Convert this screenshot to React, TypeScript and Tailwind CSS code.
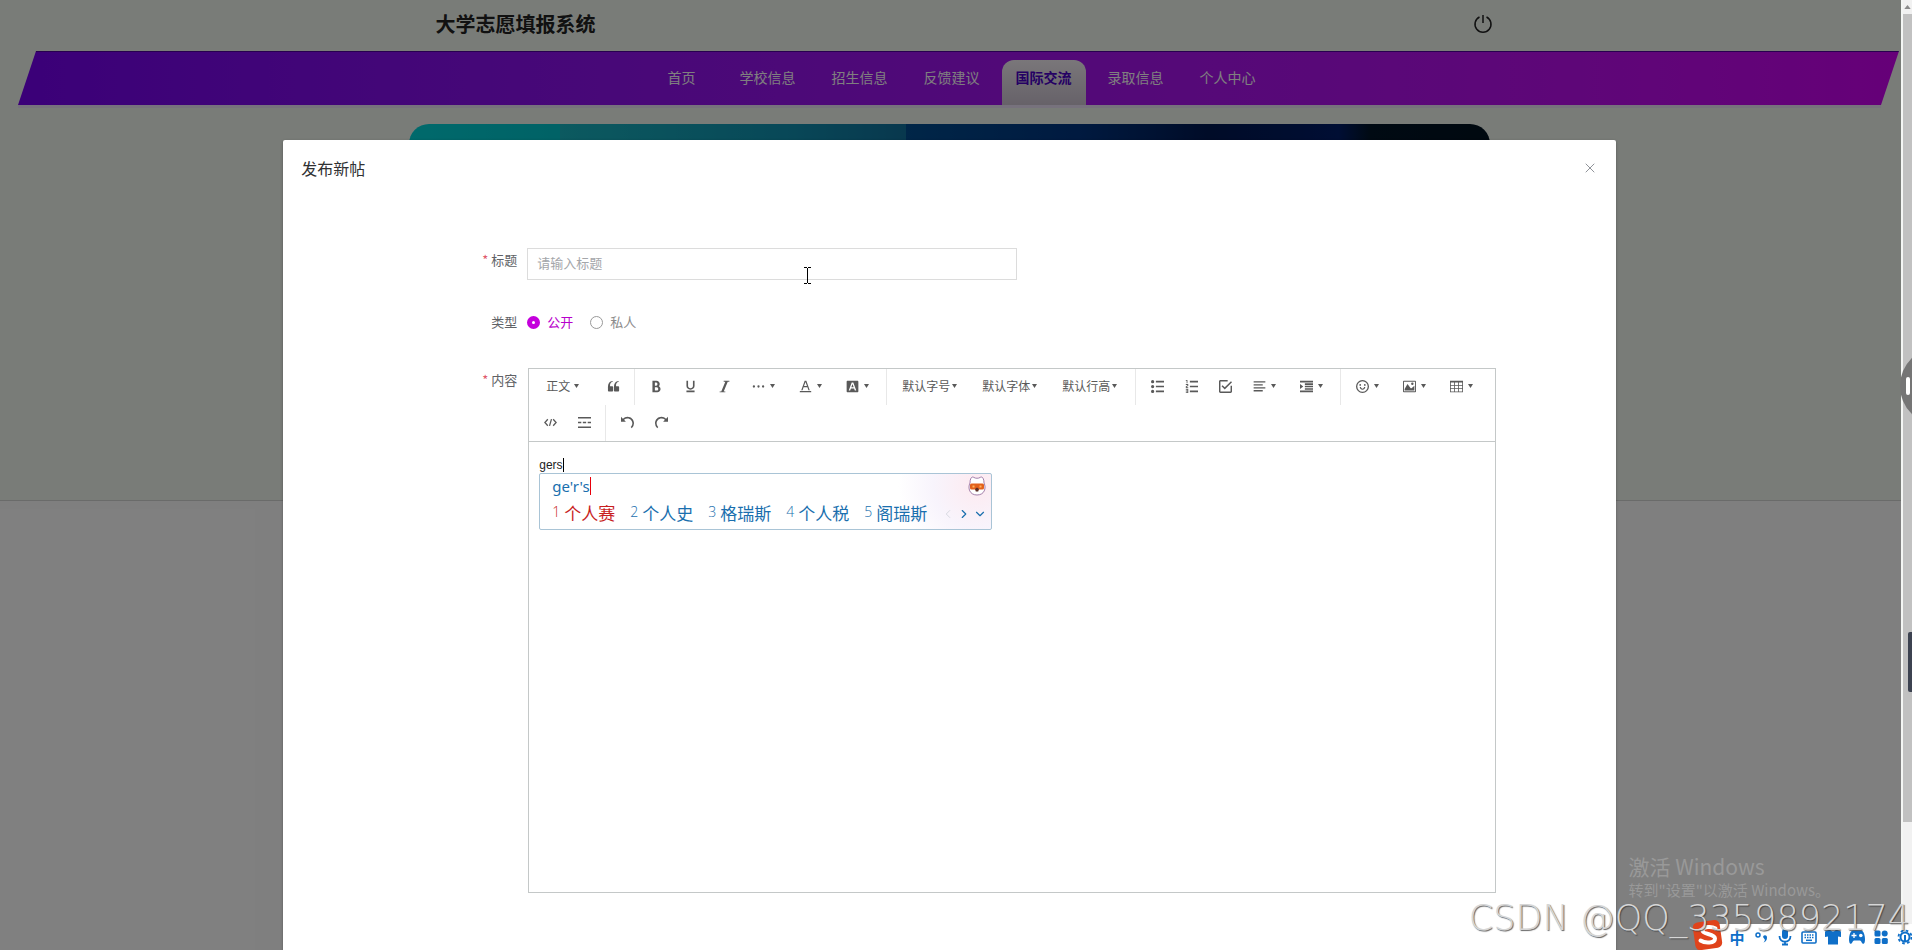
import type { ReactNode } from "react";
import { ChevronDown, ChevronLeft, ChevronRight, X } from "lucide-react";

const navItems = [
  "首页",
  "学校信息",
  "招生信息",
  "反馈建议",
  "国际交流",
  "录取信息",
  "个人中心",
];
const activeNav = "国际交流";

const candidates = ["个人赛", "个人史", "格瑞斯", "个人税", "阁瑞斯"];

const icons: Record<string, ReactNode> = {
  quote: (
    <path d="M894.6 907.1H605.4c-32.6 0-59-26.4-59-59V608.2l-4-14.9c0-315.9 125.5-485.1 376.5-507.5v59.8C752.7 180.4 711.3 315.8 711.3 442.4v41.2l31.5 12.3h151.8c32.6 0 59 26.4 59 59v293.2c0 32.5-26.4 59-59 59z m-472 0H133.4c-32.6 0-59-26.4-59-59V608.2l-4-14.9c0-315.9 125.5-485.1 376.5-507.5v59.8C280.7 180.4 239.3 315.8 239.3 442.4v41.2l31.5 12.3h151.8c32.6 0 59 26.4 59 59v293.2c0 32.5-26.4 59-59 59z" />
  ),
  bold: (
    <path d="M707.9 484.6A254.9 254.9 0 0 0 768 320c0-141.2-114.8-256-256-256H192v896h384c141.2 0 256-114.8 256-256a256.1 256.1 0 0 0-124.1-219.4zM384 192h101.5c56 0 101.5 57.4 101.5 128s-45.5 128-101.5 128H384V192z m159 640H384v-256h159c58.5 0 106 57.4 106 128s-47.5 128-106 128z" />
  ),
  underline: (
    <path d="M704 64h128v416c0 159-143.300 288-320 288S192 639 192 480V64h128v416c0 40.200 18.200 78.700 51.400 108.500C408.200 621.700 458.200 640 512 640s103.700-18.300 140.600-51.500C685.800 558.700 704 520.200 704 480V64zM192 832h640v128H192z" />
  ),
  italic: <path d="M896 64v64h-128L448 896h128v64H128v-64h128L576 128h-128V64z" />,
  more: (
    <>
      <circle cx="150" cy="512" r="90" />
      <circle cx="512" cy="512" r="90" />
      <circle cx="874" cy="512" r="90" />
    </>
  ),
  color: (
    <path d="M64 864h896v96H64zM360.600 576h302.900l81.500 224h102.200L579.200 64H444.800L176.900 800h102.200l81.500-224zM512 160l116.500 320H395.500L512 160z" />
  ),
  bgColor: (
    <path
      fillRule="evenodd"
      d="M130 50h764c44 0 80 36 80 80v764c0 44-36 80-80 80H130c-44 0-80-36-80-80V130c0-44 36-80 80-80zM450 200L215 820h115l55-150h254l55 150h115L574 200zM512 310l92 260H420z"
    />
  ),
  ul: (
    <path d="M384 64h640v128H384zM384 448h640v128H384zM384 832h640v128H384zM0 128a128 128 0 1 1 256 0a128 128 0 0 1-256 0zM0 512a128 128 0 1 1 256 0a128 128 0 0 1-256 0zM0 896a128 128 0 1 1 256 0a128 128 0 0 1-256 0z" />
  ),
  ol: (
    <path d="M384 832h640v128H384zM384 448h640v128H384zM384 64h640v128H384zM192 0v256H128V64H64V0zM128 526v50h128v64H64v-146l128-60V384H64v-64h192v146zM256 704v320H64v-64h128v-64H64v-64h128v-64H64v-64z" />
  ),
  todo: (
    <path d="M278.800 403.900l-79.700 79.700L455.100 739.600l568.900-568.900-79.600-79.700L455.100 580.300l-176.300-176.400zM910.200 910.200H113.800V113.800h568.900V0H113.800C51.200 0 0 51.200 0 113.800v796.400C0 972.800 51.200 1024 113.800 1024h796.400c62.600 0 113.800-51.200 113.800-113.800V455.100h-113.800v455.100z" />
  ),
  align: (
    <path d="M768 793.600v102.400H51.200v-102.400h716.800zM972.800 563.200v102.400H51.200v-102.400h921.600zM768 332.800v102.400H51.200v-102.400h716.800zM972.800 102.400v102.400H51.200V102.400h921.600z" />
  ),
  indent: (
    <path d="M0 64h1024v128H0zM384 256h640v128H384zM384 448h640v128H384zM384 640h640v128H384zM0 832h1024v128H0zM0 704V320l256 192z" />
  ),
  emotion: (
    <path
      fillRule="evenodd"
      d="M512 1024a512 512 0 1 1 0-1024a512 512 0 0 1 0 1024zM512 922a410 410 0 1 0 0-820a410 410 0 0 0 0 820zM290 560h90c10 70 65 120 132 120s122-50 132-120h90c-10 120-106 210-222 210S300 680 290 560zM330 320a70 70 0 1 1 0 140a70 70 0 0 1 0-140zM694 320a70 70 0 1 1 0 140a70 70 0 0 1 0-140z"
    />
  ),
  image: (
    <path
      fillRule="evenodd"
      d="M960 64H64C28.800 64 0 92.800 0 128v768c0 35.200 28.800 64 64 64h896c35.200 0 64-28.800 64-64V128c0-35.200-28.800-64-64-64zM950 138v748H74V138zM832 288a96 96 0 1 1-192 0a96 96 0 0 1 192 0zM896 832H128V704l224-384 256 320h64l224-192z"
    />
  ),
  table: (
    <path
      fillRule="evenodd"
      d="M0 64v896h1024V64H0zM384 640v-192h256v192zM640 704v192h-256v-192zM640 192v192h-256V192zM320 192v192H64V192zM64 448h256v192H64zM704 448h256v192h-256zM704 384V192h256v192zM64 704h256v192H64zM704 896v-192h256v192z"
    />
  ),
  code: (
    <path
      d="M300 260L70 512l230 252M724 260l230 252-230 252M590 250L434 774"
      fill="none"
      stroke="currentColor"
      strokeWidth="100"
    />
  ),
  divider: (
    <path d="M0 80h1024v110H0zM0 457h260v110H0zM382 457h260v110H382zM764 457h260v110H764zM0 834h1024v110H0z" />
  ),
  undo: (
    <path d="M512 64A510.300 510.300 0 0 0 150 214L0 64v384h384L240.500 304.500A382.800 382.800 0 0 1 512 192c212 0 384 172 384 384 0 114.700-50.300 217.600-130 288l84.700 96A510.700 510.700 0 0 0 1024 576c0-282.800-229.200-512-512-512z" />
  ),
  redo: (
    <path d="M512 64a510.300 510.300 0 0 1 362 150L1024 64v384H640l143.500-143.500A382.800 382.800 0 0 0 512 192c-212 0-384 172-384 384 0 114.700 50.300 217.600 130 288l-84.700 96A510.700 510.700 0 0 1 0 576C0 293.200 229.200 64 512 64z" />
  ),
};

type Tool = { kind: "icon" | "drop" | "text" | "sep"; icon?: string; label?: string };

const tools: Tool[] = [
  { kind: "icon", icon: "quote", label: "引用" },
  { kind: "sep" },
  { kind: "icon", icon: "bold", label: "粗体" },
  { kind: "icon", icon: "underline", label: "下划线" },
  { kind: "icon", icon: "italic", label: "斜体" },
  { kind: "drop", icon: "more", label: "更多" },
  { kind: "drop", icon: "color", label: "文字颜色" },
  { kind: "drop", icon: "bgColor", label: "背景色" },
  { kind: "sep" },
  { kind: "text", label: "默认字号" },
  { kind: "text", label: "默认字体" },
  { kind: "text", label: "默认行高" },
  { kind: "sep" },
  { kind: "icon", icon: "ul", label: "无序列表" },
  { kind: "icon", icon: "ol", label: "有序列表" },
  { kind: "icon", icon: "todo", label: "待办" },
  { kind: "drop", icon: "align", label: "对齐" },
  { kind: "drop", icon: "indent", label: "缩进" },
  { kind: "sep" },
  { kind: "drop", icon: "emotion", label: "表情" },
  { kind: "drop", icon: "image", label: "图片" },
  { kind: "drop", icon: "table", label: "表格" },
  { kind: "icon", icon: "code", label: "代码块" },
  { kind: "icon", icon: "divider", label: "分割线" },
  { kind: "sep" },
  { kind: "icon", icon: "undo", label: "撤销" },
  { kind: "icon", icon: "redo", label: "重做" },
];

const ToolIcon = ({ name }: { name: string }) => (
  <svg viewBox="0 0 1024 1024" className="h-[13px] w-[13px] shrink-0" fill="currentColor">
    {icons[name]}
  </svg>
);

const Caret = () => (
  <svg viewBox="0 0 10 8" className="h-1 w-[5px] shrink-0" fill="currentColor">
    <path d="M0 0h10L5 8z" />
  </svg>
);

const Toolbar = () => (
  <div className="flex flex-wrap border-b border-[#c4c8c8] px-1 text-xs text-[#595959]">
    <button type="button" className="flex h-9 w-[63px] items-center gap-1 pb-0.5 pl-[13px]">
      正文
      <Caret />
    </button>
    {tools.map((tool, i) => {
      if (tool.kind === "sep") {
        return <div key={i} className="mx-1 h-9 w-px bg-[#e8e8e8]" />;
      }
      if (tool.kind === "text") {
        return (
          <button
            key={i}
            type="button"
            className="flex h-9 w-20 items-center gap-0.5 pb-0.5 pl-[11px]"
          >
            {tool.label}
            <Caret />
          </button>
        );
      }
      if (tool.kind === "drop") {
        return (
          <button
            key={i}
            type="button"
            aria-label={tool.label}
            className="flex h-9 w-[47px] items-center gap-[5px] pb-0.5 pl-[11px]"
          >
            <ToolIcon name={tool.icon!} />
            <Caret />
          </button>
        );
      }
      return (
        <button
          key={i}
          type="button"
          aria-label={tool.label}
          className="flex h-9 w-[34px] items-center justify-center pb-0.5"
        >
          <ToolIcon name={tool.icon!} />
        </button>
      );
    })}
  </div>
);

/* Candidate window of the input method */
const ImePopup = () => (
  <div className="absolute top-full left-0 flex h-[57px] w-[453px] flex-col rounded-xs border border-[#a9c4d6] bg-white bg-[radial-gradient(circle_at_97%_20%,#fdeaf0_0%,#f8f4fc_10%,#ffffff_18%)] pr-1 pl-3 text-[#1a6fae]">
    <div className="flex h-6 items-center justify-between">
      <span className="flex items-center font-['Noto_Sans',sans-serif] text-[15px] leading-none">
        ge'r's
        <span className="h-[18px] w-px bg-red-600" />
      </span>
      <svg viewBox="0 0 20 22" className="h-[22px] w-5">
        <path
          d="M3 8C3 3 5 1 7 2.500 8.500 3.500 11.500 3.500 13 2.500 15 1 17 3 17 8c2.500 5 .5 12-7 12S.5 13 3 8z"
          fill="#fff"
          stroke="#8a5f96"
          strokeWidth=".8"
        />
        <rect x="3" y="8.500" width="14" height="6" rx="1.500" fill="#e2611c" />
        <path d="M5.500 10.500h2v2h-2zM12.500 10.500h2v2h-2z" fill="#ffb35c" />
        <path d="M8 14l2-1.500 2 1.500-.8 2.500H8.800z" fill="#5b2d26" />
      </svg>
    </div>
    <div className="flex h-7 items-center">
      <ol className="flex gap-[15px]">
        {candidates.map((word, i) => (
          <li
            key={word}
            className={`flex items-center gap-1 text-[17px] leading-none ${
              i === 0 ? "text-[#c81e1e]" : ""
            }`}
          >
            <span className="w-2 font-['Open_Sans',sans-serif] text-sm leading-none font-light">
              {i + 1}
            </span>
            {word}
          </li>
        ))}
      </ol>
      <div className="mt-1 ml-auto flex items-center gap-0.5">
        <ChevronLeft className="h-[14px] w-[14px] text-gray-300" strokeWidth={1.500} />
        <ChevronRight className="h-[14px] w-[14px]" strokeWidth={2} />
        <ChevronDown className="h-[14px] w-[14px]" strokeWidth={2} />
      </div>
    </div>
  </div>
);

const Label = ({ text, htmlFor, required }: { text: string; htmlFor?: string; required?: boolean }) => (
  <label htmlFor={htmlFor} className="w-11 shrink-0 text-right leading-6 whitespace-nowrap text-[#606266]">
    {required && <span className="mr-[3px] text-[#e05a6a]">*</span>}
    {text}
  </label>
);

const Dialog = () => (
  <div
    role="dialog"
    aria-label="发布新帖"
    className="mt-[140px] min-h-full rounded-xs bg-white shadow-[0_1px_3px_rgba(0,0,0,0.3)]"
  >
    <div className="flex items-center justify-between px-[18px] pt-4">
      <h2 className="text-base leading-6 text-[#303133]">发布新帖</h2>
      <button type="button" aria-label="关闭" className="text-[#909399]">
        <X className="h-4 w-4" strokeWidth={1.500} />
      </button>
    </div>

    <form className="pt-[68px] pr-[119px] pl-[190px] text-[13px]">
      <div className="flex gap-[10px]">
        <Label text="标题" htmlFor="title" required />
        <input
          id="title"
          placeholder="请输入标题"
          className="h-8 w-[490px] border border-[#dcdcdc] px-[9px] pb-[3px] text-[#606266] outline-none placeholder:text-[#a4a6aa]"
        />
      </div>

      <div className="mt-[30px] flex gap-[10px]">
        <Label text="类型" />
        <div className="flex items-center gap-[17px]">
          <label className="flex items-center gap-[7px] text-[#b800cc]">
            <input
              type="radio"
              name="kind"
              defaultChecked
              className="h-[13px] w-[13px] appearance-none rounded-full border border-[#aaa] checked:border-[5px] checked:border-[#c400dc]"
            />
            公开
          </label>
          <label className="flex items-center gap-[7px] text-[#8c8c8c]">
            <input
              type="radio"
              name="kind"
              className="h-[13px] w-[13px] appearance-none rounded-full border border-[#999] checked:border-[5px] checked:border-[#c400dc]"
            />
            私人
          </label>
        </div>
      </div>

      <div className="mt-[34px] flex gap-[10px]">
        <Label text="内容" required />
        <div className="mx-px min-w-0 flex-1 border border-[#c4c8c8]">
          <Toolbar />
          <div className="min-h-[450px] px-[10px] pt-[14px]">
            <div className="relative flex h-[17px] items-center">
              <p className="font-['Liberation_Sans','Noto_Sans_CJK_SC',sans-serif] text-xs text-[#222]">
                gers
              </p>
              <span className="h-[14px] w-px bg-black" />
              <ImePopup />
            </div>
          </div>
        </div>
      </div>
    </form>
  </div>
);

const TrayBar = () => (
  <div className="absolute right-0 bottom-0 flex h-[26px] w-[212px] items-center bg-white text-[#0f6fc8]">
    <svg viewBox="0 0 32 32" className="-mt-1 -ml-2 h-8 w-8 shrink-0">
      <rect x="2" y="2" width="27" height="28" rx="5" fill="#e0431b" transform="rotate(-8 16 16)" />
      <path
        d="M23.500 9.500c-4-2.500-12.500-2-13 2-.4 4 12.500 3 12.500 8 0 5-10 5-14.500 2"
        fill="none"
        stroke="#fff"
        strokeWidth="4"
        strokeLinecap="round"
      />
    </svg>
    <div className="ml-px flex items-center">
      <span className="w-6 text-center text-[15px] leading-none font-bold">中</span>
      <svg viewBox="0 0 24 24" className="h-6 w-6">
        <circle cx="9" cy="10" r="2" fill="none" stroke="currentColor" strokeWidth="1.500" />
        <path d="M14 12a2 2 0 1 1 4 .5c0 2.500-1 4-3.500 5 1-1.200 1.500-2 1.300-3z" fill="currentColor" />
      </svg>
      <svg viewBox="0 0 24 24" className="h-6 w-6">
        <rect x="9" y="4" width="6" height="10" rx="3" fill="currentColor" />
        <path d="M6.500 11c0 7.500 11 7.500 11 0M12 16.500v3M9 19.500h6" fill="none" stroke="currentColor" strokeWidth="1.800" />
      </svg>
      <svg viewBox="0 0 24 24" className="h-6 w-6">
        <rect x="5" y="7" width="14" height="11" rx="1" fill="none" stroke="currentColor" strokeWidth="1.600" />
        <path d="M7.500 10h9M7.500 12.500h9" stroke="currentColor" strokeWidth="1.500" strokeDasharray="1.500 1" />
        <path d="M9 15.300h6" stroke="currentColor" strokeWidth="1.500" />
      </svg>
      <svg viewBox="0 0 24 24" className="h-6 w-6" fill="currentColor">
        <path d="M9 4.500c1 2.500 5 2.500 6 0l5 2L20 12l-3-.5V19.500H7V11.500L4 12V6.500z" />
      </svg>
      <svg viewBox="0 0 24 24" className="h-6 w-6">
        <path
          d="M8 5.500h8c4 0 5 11.500 3 13S16.500 15.500 15 15.500H9c-1.500 0-2 4.500-4 3S4 5.500 8 5.500z"
          fill="currentColor"
        />
        <path d="M9 8v5M6.500 10.500h5" stroke="#fff" strokeWidth="1.300" />
        <circle cx="15.800" cy="10.500" r="1.800" fill="#fff" />
      </svg>
      <svg viewBox="0 0 24 24" className="h-6 w-6" fill="currentColor">
        <rect x="5.500" y="5.500" width="6" height="6" rx="1.500" />
        <circle cx="15.700" cy="8.500" r="3" />
        <rect x="5.500" y="13" width="6" height="6" rx="1.500" />
        <rect x="12.800" y="13" width="6" height="6" rx="1.500" />
      </svg>
      <svg viewBox="0 0 24 24" className="h-6 w-6">
        <circle cx="12" cy="12" r="4.500" fill="none" stroke="currentColor" strokeWidth="2" />
        <circle cx="12" cy="12" r="6.500" fill="none" stroke="currentColor" strokeWidth="1.800" strokeDasharray="2.600 2.500" />
        <path d="M12 10v7" stroke="currentColor" strokeWidth="2" />
      </svg>
    </div>
  </div>
);

const App = () => {
  return (
    <div className="relative flex h-screen overflow-hidden bg-white font-['Noto_Sans_CJK_SC',sans-serif]">
      <main className="relative min-w-0 flex-1 overflow-hidden">
        {/* Page behind the dialog */}
        <div className="border-b border-[#d4d6d4] bg-[#f2f8f1]">
          <header className="mx-auto flex h-[51px] max-w-[1104px] items-center justify-between pr-[10px] pb-1 pl-[37px]">
            <h1 className="text-xl leading-6 font-bold text-[#222]">大学志愿填报系统</h1>
            <button type="button" aria-label="退出">
              <svg viewBox="0 0 20 20" className="h-5 w-5" fill="none" stroke="#222" strokeWidth="1.500">
                <path d="M10 1v8M6.500 3a8 8 0 1 0 7 0" />
              </svg>
            </button>
          </header>

          <nav className="mr-0.5 ml-[18px] flex h-[54px] items-end justify-center gap-2 border-t border-[#5000a0] bg-linear-to-r from-[#7600f0] to-[#cc00f0] pr-0.5 [clip-path:polygon(18px_0,100%_0,calc(100%-18px)_100%,0_100%)]">
            {navItems.map((item) => (
              <a
                key={item}
                href="#"
                className={`min-w-[72px] rounded-t-xl px-[14px] pt-[7px] pb-[18px] text-center text-sm leading-5 ${
                  item === activeNav
                    ? "bg-linear-to-b from-[#f4eef4] to-[#cdc4d2] font-bold text-[#4a00c8]"
                    : "text-white"
                }`}
              >
                {item}
              </a>
            ))}
          </nav>
          <div className="mr-5 ml-[18px] h-[3px] bg-[#efe4fa]" />

          <div className="pr-[3px]">
            <div className="mx-auto mt-4 h-[340px] max-w-[1081px] rounded-[20px] bg-[linear-gradient(90deg,#00d4d8_0%,#00c4cc_14%,#18b4c0_14%,#1090b0_35%,#10709c_46%,#004c90_46%,#003480_62%,#001850_74%,#001c68_86%,#001426_89%,#001220_100%)]" />
          </div>
          <div className="h-9" />
        </div>

        {/* Dialog with its mask */}
        <div className="absolute inset-0 overflow-hidden bg-black/50 pr-[15%] pl-[14.9%]">
          <Dialog />
        </div>

        {/* Text cursor */}
        <svg viewBox="0 0 9 17" className="absolute top-[267px] left-[803px] h-[17px] w-[9px]">
          <path d="M1 .5h3M5 .5h3M4.500 1v15M1 16.500h3M5 16.500h3" stroke="#000" />
        </svg>

        <div className="absolute right-[71px] bottom-[50px] text-[#999]">
          <p className="text-[21px] leading-7">激活 Windows</p>
          <p className="text-[15px] leading-5">转到"设置"以激活 Windows。</p>
        </div>
      </main>

      {/* Scroll bar */}
      <div className="flex w-[11px] flex-col border-l-2 border-[#f4f6f4] bg-[#f1f1f1]">
        <div className="flex h-[14px] items-center justify-center">
          <svg viewBox="0 0 8 5" className="h-1 w-[7px]" fill="#8a8a8a">
            <path d="M0 5h8L4 0z" />
          </svg>
        </div>
        <div className="h-[85%] bg-[#c1c1c1]" />
      </div>

      {/* Side handles */}
      <div className="absolute top-[347px] -right-[66px] h-[78px] w-[78px] rounded-full bg-[#757575]">
        <div className="mt-[30px] ml-[6px] h-[18px] w-1 rounded-full bg-white" />
      </div>
      <div className="absolute top-[632px] right-0 h-[60px] w-1 rounded-l-xs bg-[#3c4250]" />

      <TrayBar />
      <p className="absolute right-[2px] bottom-2 font-['DejaVu_Sans',sans-serif] text-[35px] leading-[48px] font-extralight whitespace-nowrap text-[#d6d6d6] [text-shadow:1px_1px_1px_rgba(60,60,60,0.8)]">
        CSDN @QQ_3359892174
      </p>
    </div>
  );
};

export default App;
